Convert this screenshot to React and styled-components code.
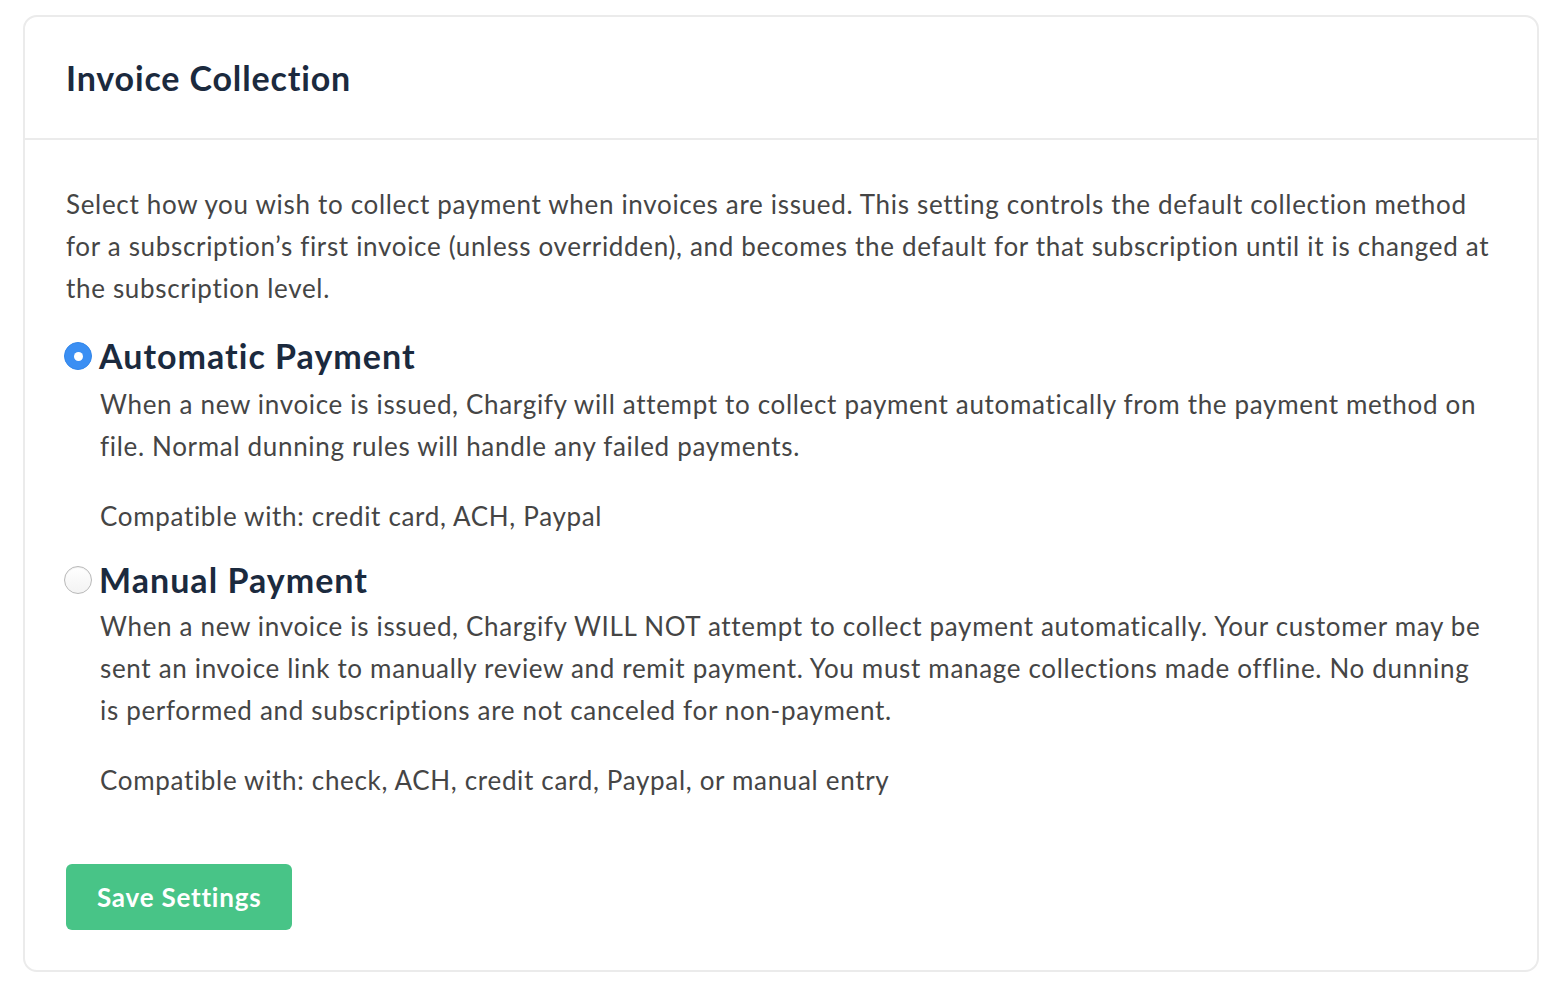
import React, { useState } from 'react';
import styled, { createGlobalStyle } from 'styled-components';

const GlobalStyle = createGlobalStyle`
  html, body {
    margin: 0;
    background: #ffffff;
  }
  body {
    padding: 15px 19px 20px 23px;
    font-family: Lato, "Open Sans", "Liberation Sans", sans-serif;
    font-variant-ligatures: no-common-ligatures;
    -webkit-font-smoothing: antialiased;
  }
`;

const Card = styled.section`
  border: 2px solid #ebebeb;
  border-radius: 14px;
  background: #fff;
`;

const Header = styled.header`
  height: 121px;
  display: flex;
  align-items: center;
  padding: 0 41px;
  border-bottom: 2px solid #ebebeb;
`;

const Title = styled.h2`
  margin: 0;
  font-size: 34px;
  font-weight: 700;
  letter-spacing: 0.025em;
  color: #1b2a3e;
`;

const Body = styled.div`
  padding: 43px 40px 40px 41px;
`;

const Text = styled.p`
  margin: 0;
  font-size: 26px;
  line-height: 42px;
  letter-spacing: 0.026em;
  color: #454545;
`;

const Option = styled.div`
  margin-top: ${({ $first }) => ($first ? '27px' : '23px')};
`;

const OptionLabel = styled.label`
  display: flex;
  align-items: center;
  gap: 7px;
  cursor: pointer;
`;

const Radio = styled.span`
  width: 28px;
  height: 28px;
  border-radius: 50%;
  box-sizing: border-box;
  flex-shrink: 0;
  display: flex;
  align-items: center;
  justify-content: center;
  margin-left: -2px;
  background: ${({ $checked }) =>
    $checked ? '#3b8ff3' : 'linear-gradient(#ffffff, #f3f3f3)'};
  border: ${({ $checked }) => ($checked ? '1px solid #3286ea' : '1.5px solid #b9b9b9')};
  box-shadow: ${({ $checked }) => ($checked ? 'none' : 'inset 0 1px 1px rgba(0,0,0,0.06)')};

  &::after {
    content: '';
    display: ${({ $checked }) => ($checked ? 'block' : 'none')};
    width: 9px;
    height: 9px;
    border-radius: 50%;
    background: #fff;
  }
`;

const OptionTitle = styled.span`
  font-size: 34px;
  line-height: 40px;
  font-weight: 700;
  letter-spacing: 0.03em;
  color: #1b2a3e;
`;

const OptionBody = styled.div`
  padding: 0 8px 0 34px;
  margin-top: ${({ $tight }) => ($tight ? '5px' : '7px')};
  display: flex;
  flex-direction: column;
  gap: 28px;
`;

const SaveButton = styled.button`
  margin-top: 63px;
  height: 66px;
  padding: 0 31px;
  border: none;
  border-radius: 6px;
  background: #48c487;
  color: #fff;
  font-family: inherit;
  font-variant-ligatures: inherit;
  letter-spacing: 0.03em;
  font-size: 26px;
  font-weight: 700;
  cursor: pointer;
`;

const options = [
  {
    id: 'automatic',
    title: 'Automatic Payment',
    text: 'When a new invoice is issued, Chargify will attempt to collect payment automatically from the payment method on file. Normal dunning rules will handle any failed payments.',
    compat: 'Compatible with: credit card, ACH, Paypal',
  },
  {
    id: 'manual',
    title: 'Manual Payment',
    text: 'When a new invoice is issued, Chargify WILL NOT attempt to collect payment automatically. Your customer may be sent an invoice link to manually review and remit payment. You must manage collections made offline. No dunning is performed and subscriptions are not canceled for non-payment.',
    compat: 'Compatible with: check, ACH, credit card, Paypal, or manual entry',
  },
];

export default function App() {
  const [method, setMethod] = useState('automatic');

  return (
    <>
      <GlobalStyle />
      <Card>
        <Header>
          <Title>Invoice Collection</Title>
        </Header>
        <Body>
          <Text>
            Select how you wish to collect payment when invoices are issued. This setting controls the
            default collection method for a subscription’s first invoice (unless overridden), and becomes
            the default for that subscription until it is changed at the subscription level.
          </Text>
          {options.map((o, i) => (
            <Option key={o.id} $first={i === 0}>
              <OptionLabel onClick={() => setMethod(o.id)}>
                <Radio $checked={method === o.id} />
                <OptionTitle>{o.title}</OptionTitle>
              </OptionLabel>
              <OptionBody $tight={i > 0}>
                <Text>{o.text}</Text>
                <Text>{o.compat}</Text>
              </OptionBody>
            </Option>
          ))}
          <SaveButton>Save Settings</SaveButton>
        </Body>
      </Card>
    </>
  );
}
